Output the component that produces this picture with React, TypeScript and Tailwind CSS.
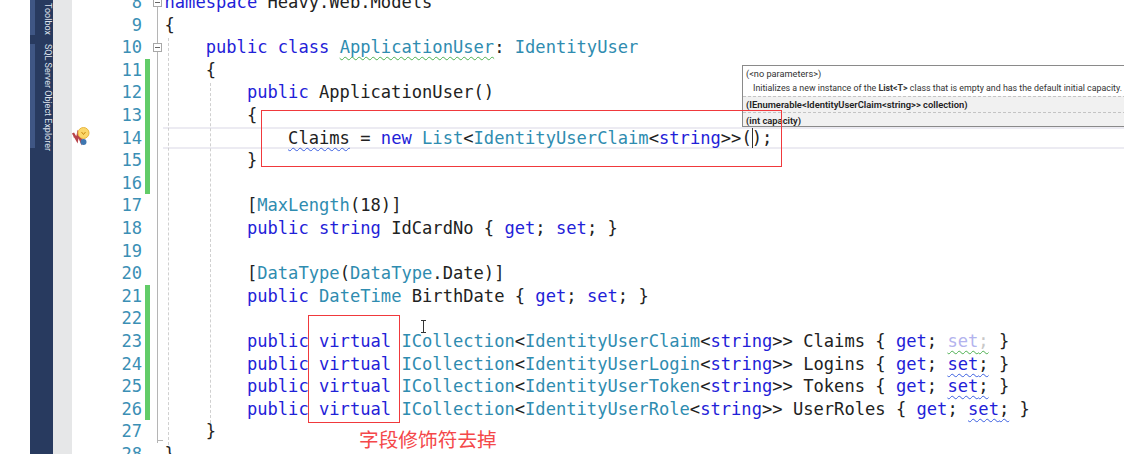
import React from "react";

const K = ({ children }: { children: React.ReactNode }) => <span className="text-[#1f22d8]">{children}</span>;
const T = ({ children }: { children: React.ReactNode }) => <span className="text-[#2f8cb0]">{children}</span>;
const S = ({ children }: { children: React.ReactNode }) => (
  <span className="underline decoration-wavy decoration-[#3a5fe0] decoration-1 underline-offset-[3px]">{children}</span>
);

const Get = () => (
  <>
    {"{ "}
    <K>get</K>
    {"; "}
    <S>
      <K>set</K>;
    </S>
    {" }"}
  </>
);

type Line = { n: number; fold?: boolean; green?: boolean; code: React.ReactNode; current?: boolean };

const coll = (name: string, rest: React.ReactNode) => (
  <>
    {"        "}
    <K>public virtual </K>
    <T>ICollection</T>
    {"<"}
    <T>{name}</T>
    {"<"}
    <K>string</K>
    {">> "}
    {rest}
  </>
);

const lines: Line[] = [
  { n: 8, fold: true, code: <><K>namespace</K> Heavy.Web.Models</> },
  { n: 9, code: "{" },
  { n: 10, fold: true, code: <>{"    "}<K>public class</K> <span className="text-[#2f8cb0] underline decoration-wavy decoration-[#4caf50] decoration-1 underline-offset-[3px]">ApplicationUser</span>: <T>IdentityUser</T></> },
  { n: 11, green: true, code: "    {" },
  { n: 12, green: true, code: <>{"        "}<K>public</K> ApplicationUser()</> },
  { n: 13, green: true, code: "        {" },
  { n: 14, green: true, current: true, code: <>{"            "}<S>Claims</S> = <K>new</K> <T>List</T>{"<"}<T>IdentityUserClaim</T>{"<"}<K>string</K>{">>("}<span className="border-l border-[#333] -mr-px" />{");"}</> },
  { n: 15, green: true, code: "        }" },
  { n: 16, green: true, code: "" },
  { n: 17, code: <>{"        ["}<T>MaxLength</T>(18)]</> },
  { n: 18, code: <>{"        "}<K>public string</K> IdCardNo {"{ "}<K>get</K>; <K>set</K>; {"}"}</> },
  { n: 19, code: "" },
  { n: 20, code: <>{"        ["}<T>DataType</T>(<T>DataType</T>.Date)]</> },
  { n: 21, green: true, code: <>{"        "}<K>public</K> <T>DateTime</T> BirthDate {"{ "}<K>get</K>; <K>set</K>; {"}"}</> },
  { n: 22, green: true, code: "" },
  { n: 23, green: true, code: coll("IdentityUserClaim", <>Claims {"{ "}<K>get</K>; <span className="text-[#b3b3ee] underline decoration-wavy decoration-[#4caf50] decoration-1 underline-offset-[3px]">set<span className="text-[#c8c8c8]">;</span></span> {"}"}</>) },
  { n: 24, green: true, code: coll("IdentityUserLogin", <>Logins <Get /></>) },
  { n: 25, green: true, code: coll("IdentityUserToken", <>Tokens <Get /></>) },
  { n: 26, green: true, code: coll("IdentityUserRole", <>UserRoles <Get /></>) },
  { n: 27, code: "    }" },
  { n: 28, code: "}" },
];

export default function App() {
  return (
    <div className="relative w-[1124px] h-[454px] overflow-hidden bg-white flex">
      <div className="w-[30px] shrink-0 bg-white" />
      <div className="w-[23px] shrink-0 bg-[#283a5f] flex flex-col gap-[9px] font-['Roboto',sans-serif] text-[9px] text-[#dfe4ee]">
        <div className="h-[35px] border-l-[5px] border-[#3f5684] [writing-mode:vertical-rl] pt-[3px] leading-[10px]">Toolbox</div>
        <div className="h-[104px] border-l-[5px] border-[#3f5684] [writing-mode:vertical-rl] leading-[10px] whitespace-nowrap">SQL Server Object Explorer</div>
      </div>
      <div className="w-[19px] shrink-0 bg-[#e6e7e8]" />
      <div className="flex-1 -mt-[9px] font-['DejaVu_Sans_Mono',monospace] text-[17.12px] text-[#222]">
        {lines.map((l) => (
          <div
            key={l.n}
            className={`relative flex h-[22.6px] leading-[22.6px] ${l.current ? "before:absolute before:left-[91px] before:right-0 before:top-0 before:bottom-0 before:border-y-2 before:border-[#ecebf2]" : ""}`}
          >
            <div className="w-[70px] text-right text-[#3b8fb5] shrink-0">{l.n}</div>
            <div className="w-[3px] shrink-0" />
            <div className={`w-[5px] shrink-0 ${l.green ? "bg-[#62cc68]" : ""}`} />
            <div className="relative w-[14.5px] shrink-0">
              {l.n < 28 && <div className="absolute left-[7px] top-0 bottom-0 w-px bg-[#b5b5b5]" />}
              {l.n === 27 && <div className="absolute left-[7px] bottom-[2px] w-[6px] h-px bg-[#b5b5b5]" />}
              {l.fold && (
                <div className="absolute left-[3px] top-[7px] w-[9px] h-[9px] bg-white border border-[#a8a8a8] flex items-center justify-center">
                  <div className="w-[5px] h-px bg-[#666]" />
                </div>
              )}
            </div>
            <pre className="relative font-['DejaVu_Sans_Mono',monospace] text-[17.12px] leading-[22.6px] m-0">{l.code}</pre>
          </div>
        ))}
      </div>

      {/* indent guides */}
      <div className="absolute left-[168px] top-[38px] h-[407px] border-l border-dashed border-[#d0d0d0]" />
      <div className="absolute left-[210px] top-[83px] h-[340px] border-l border-dashed border-[#d0d0d0]" />

      {/* light bulb margin glyph */}
      <svg className="absolute left-[71px] top-[126px]" width="22" height="20" viewBox="0 0 22 20">
        <path d="M2 7 L6 14 L7 8 L10 15 L11 8" fill="none" stroke="#b8434a" strokeWidth="2.4" />
        <path d="M2.5 11 L11 9" fill="none" stroke="#b8434a" strokeWidth="1.2" />
        <circle cx="12.5" cy="16" r="3" fill="#3e76b0" />
        <circle cx="12.5" cy="7" r="5.5" fill="#fbd76a" stroke="#e8b640" strokeWidth="1" />
        <path d="M10.5 6 L12.5 8.5 L14.5 6" fill="none" stroke="#c98a10" strokeWidth="1" />
      </svg>

      {/* I-beam */}
      <svg className="absolute left-[420px] top-[320px]" width="7" height="13" viewBox="0 0 7 13">
        <path d="M1 .5 H6 M1 12.5 H6 M3.5 .5 V12.5" stroke="#333" strokeWidth="1" fill="none" />
      </svg>

      {/* parameter info tooltip */}
      <div className="absolute left-[742px] top-[65px] w-[390px] h-[62px] bg-white border border-[#8a8a8a] font-['Roboto',sans-serif] text-[8.85px] leading-[15.5px] text-[#333] overflow-hidden whitespace-pre">
        <div className="pl-[3px] h-[15px] text-[9.2px]">(&lt;no parameters&gt;)</div>
        <div className="pl-[10px] h-[15px]">
          Initializes a new instance of the <b>List&lt;T&gt;</b> class that is empty and has the default initial capacity.
        </div>
        <div className="pl-[3px] h-[16px] text-[9.4px] font-semibold text-[#222] bg-[#f1f1f1] border-t border-dashed border-[#c4c4c4]">(IEnumerable&lt;IdentityUserClaim&lt;string&gt;&gt; collection)</div>
        <div className="pl-[3px] h-[15px] text-[9.4px] font-semibold text-[#222] bg-[#f1f1f1] border-t border-dashed border-[#c4c4c4]">(int capacity)</div>
      </div>

      {/* annotation boxes */}
      <div className="absolute left-[261px] top-[110px] w-[521px] h-[57px] border border-[#f0393c]" />
      <div className="absolute left-[308px] top-[315px] w-[92px] h-[108px] border border-[#f0393c]" />
      <div className="absolute left-[359px] top-[428px] text-[19.7px] leading-[22px] text-[#f4484a] font-['Noto_Sans_CJK_SC',sans-serif] whitespace-nowrap">字段修饰符去掉</div>
    </div>
  );
}
